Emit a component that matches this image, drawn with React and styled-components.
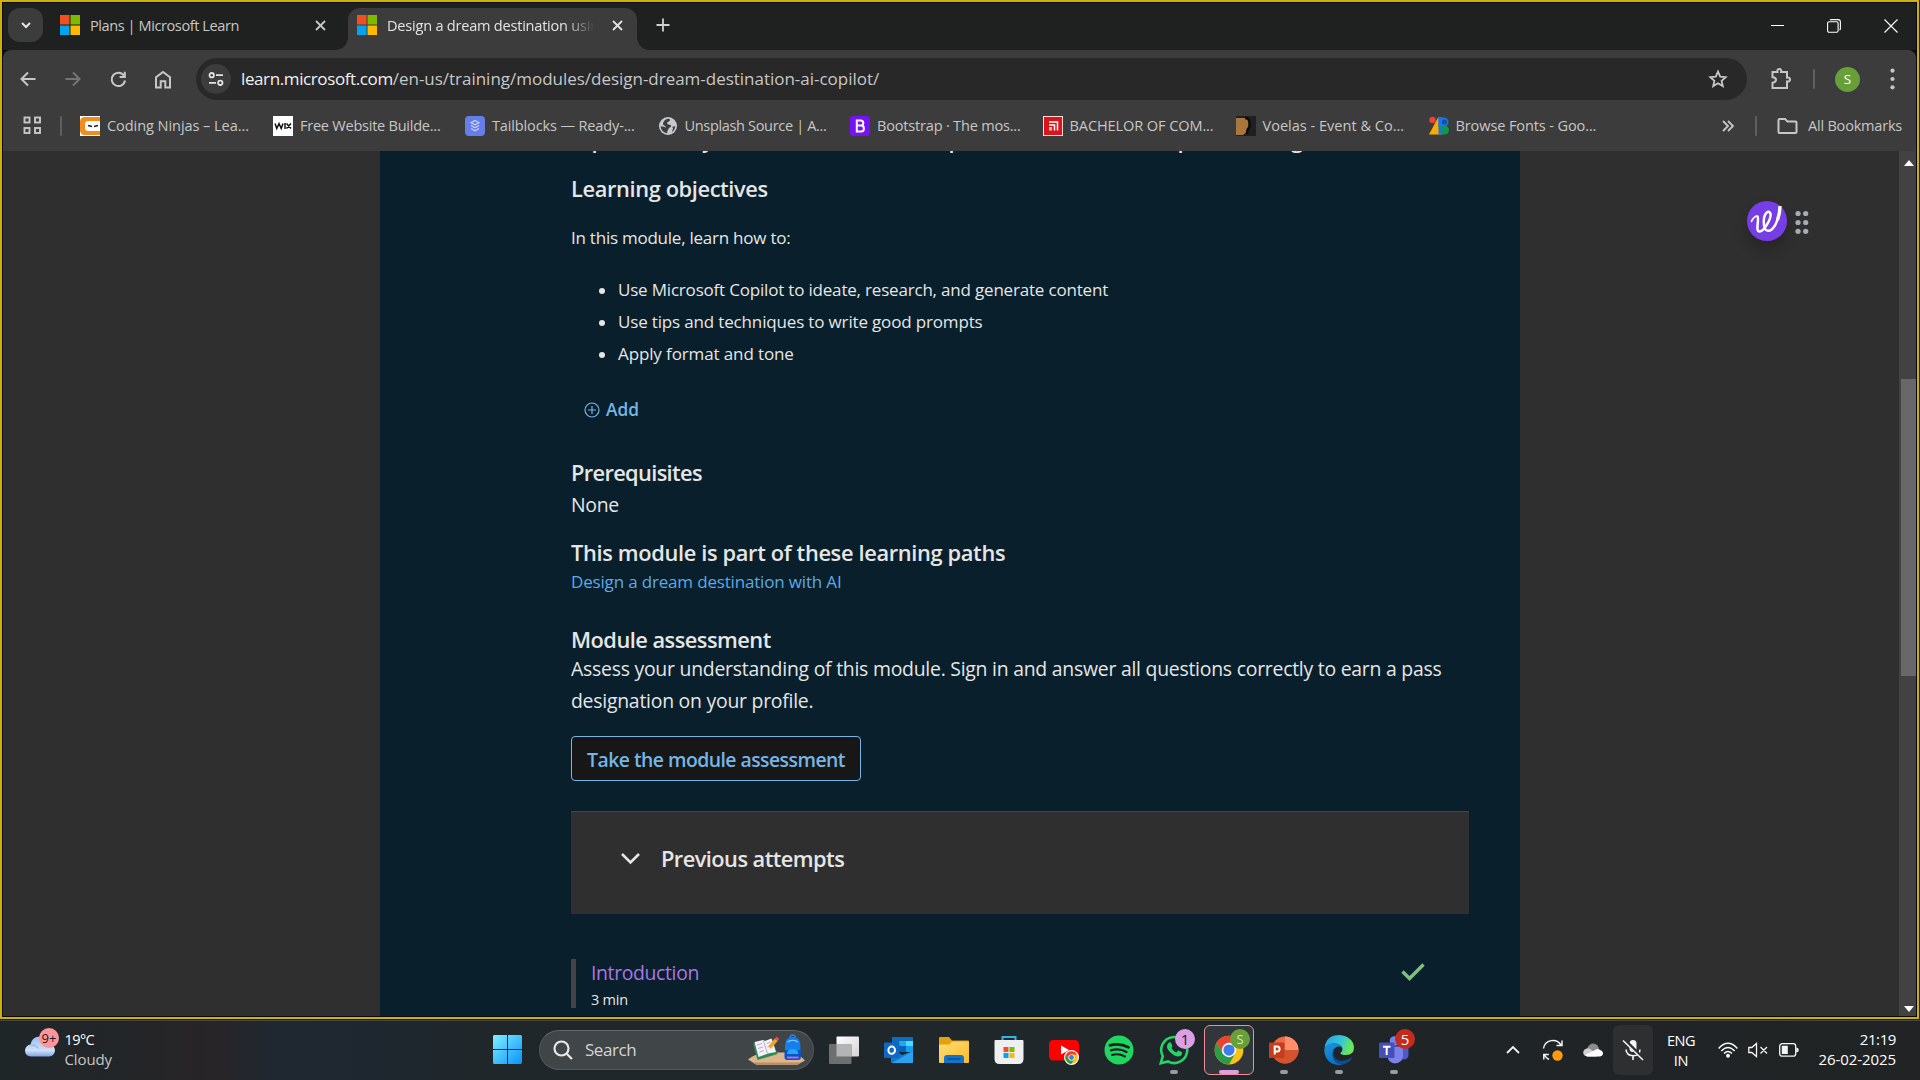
import React from 'react';
import styled, { createGlobalStyle, css } from 'styled-components';

const GlobalStyle = createGlobalStyle`
  * { box-sizing: border-box; }
  body { margin: 0; background: #1f2426; overflow: hidden; }
  #root { font-family: "Open Sans", "Noto Sans", sans-serif; }
  h2, p, ul { margin: 0; padding: 0; font-weight: 400; }
  svg { display: block; flex: none; }
`;

/* ---------- shell ---------- */

const Screen = styled.div`
  width: 1920px;
  height: 1080px;
  display: flex;
  flex-direction: column;
  overflow: hidden;
  background: #1c1f20;
`;

const BrowserWindow = styled.div`
  width: 1919px;
  height: 1019px;
  flex: none;
  display: flex;
  flex-direction: column;
  border: 2px solid #cdb00c;
  padding: 1px;
  background: #0b0c0c;
`;

const Label = styled.span`
  display: block;
  white-space: nowrap;
  font-size: ${(p) => p.$size || 14.55}px;
  letter-spacing: ${(p) => p.$ls || 0}px;
  color: ${(p) => p.$color || '#c7c7c7'};
  line-height: 20px;
`;

/* ---------- tab strip ---------- */

const TabStrip = styled.div`
  height: 47px;
  flex: none;
  display: flex;
  align-items: flex-start;
  background: #1f2120;
  padding: 5px 0 0 5px;
`;

const TabSearch = styled.button`
  width: 35px;
  height: 34px;
  border: 0;
  padding: 0;
  border-radius: 12px;
  background: #3c3c3c;
  display: grid;
  place-items: center;
`;

const Tab = styled.div`
  position: relative;
  display: flex;
  align-items: center;
  height: ${(p) => (p.$active ? 42 : 34)}px;
  width: ${(p) => (p.$active ? 289 : 305)}px;
  padding: ${(p) => (p.$active ? '0 14px 8px 9px' : '0 22px 0 17px')};
  ${(p) =>
    p.$active &&
    css`
      background: #3c3c3c;
      border-radius: 12px 12px 0 0;
      &::before,
      &::after {
        content: '';
        position: absolute;
        bottom: 0;
        width: 12px;
        height: 12px;
      }
      &::before {
        left: -12px;
        background: radial-gradient(circle at 0 0, transparent 11.5px, #3c3c3c 12px);
      }
      &::after {
        right: -12px;
        background: radial-gradient(circle at 100% 0, transparent 11.5px, #3c3c3c 12px);
      }
    `}
`;

const TabTitle = styled(Label)`
  margin-left: 10px;
  flex: 1;
  overflow: hidden;
  ${(p) =>
    p.$fade &&
    css`
      margin-right: 19px;
      -webkit-mask-image: linear-gradient(90deg, #000 86%, transparent 101%);
      mask-image: linear-gradient(90deg, #000 86%, transparent 101%);
    `}
`;

const NewTab = styled.div`
  width: 52px;
  height: 34px;
  display: grid;
  place-items: center;
`;

const WindowControls = styled.div`
  margin-left: auto;
  display: flex;
`;

const WindowControl = styled.div`
  width: 57px;
  height: 35px;
  padding-left: 7px;
  display: grid;
  place-items: center;
`;

/* ---------- toolbar ---------- */

const Toolbar = styled.div`
  height: 54px;
  flex: none;
  display: flex;
  align-items: center;
  background: #3c3c3c;
  border-radius: 8px 8px 0 0;
  padding: 4px 0 0 2px;
`;

const ToolButton = styled.div`
  width: ${(p) => p.$w || 45}px;
  padding-left: ${(p) => p.$inset || 0}px;
  flex: none;
  display: grid;
  place-items: center;
`;

const Omnibox = styled.div`
  width: 1551px;
  height: 42px;
  flex: none;
  margin-left: 11px;
  border-radius: 21px;
  background: #282828;
  display: flex;
  align-items: center;
  padding: 0 19px 0 5px;
`;

const SiteInfo = styled.div`
  width: 30px;
  height: 30px;
  border-radius: 50%;
  background: #3c3c3c;
  display: grid;
  place-items: center;
  margin-right: 10px;
`;

const OmniboxEnd = styled.div`
  margin-left: auto;
`;

const Divider = styled.div`
  width: 2px;
  height: 20px;
  flex: none;
  border-radius: 1px;
  background: #5e5f60;
  margin: ${(p) => p.$m || '0'};
`;

const Avatar = styled.div`
  width: 25px;
  height: 25px;
  flex: none;
  margin-left: 20px;
  border-radius: 50%;
  background: #689f38;
  color: #fff;
  font-size: 13.5px;
  line-height: 25px;
  text-align: center;
`;

/* ---------- bookmarks ---------- */

const BookmarkBar = styled.div`
  height: 47px;
  flex: none;
  display: flex;
  align-items: center;
  background: #3c3c3c;
  padding: 0 14px 4px 20px;
`;

const Bookmark = styled.div`
  width: ${(p) => p.$w}px;
  display: flex;
  align-items: center;
  gap: 7px;
  flex: none;
`;

const BookmarkText = styled(Label)`
  margin-top: -1px;
`;

const BookmarkEnd = styled.div`
  margin-left: auto;
  display: flex;
  align-items: center;
`;

const AllBookmarks = styled(BookmarkText)`
  margin-left: 10px;
`;

/* ---------- page ---------- */

const Viewport = styled.div`
  flex: 1;
  min-height: 0;
  display: flex;
  background: #2f2f2f;
  overflow: hidden;
`;

const Gutter = styled.div`
  width: ${(p) => p.$w}px;
  flex: none;
`;

const Article = styled.main`
  width: 1140px;
  flex: none;
  background: #091f2b;
  padding: 0 51px 0 191px;
  color: #e6e6e6;
`;

const ScrolledLine = styled.div`
  height: 2px;
  overflow: hidden;
  display: flex;
  align-items: flex-end;
  font-size: 21.8px;
  font-weight: 600;
  line-height: 30px;
`;

const ScrolledGlyph = styled.span`
  width: ${(p) => p.$w}px;
  flex: none;
  text-align: right;
  margin-bottom: -2px;
`;

const Heading = styled.h2`
  && { font-weight: 600; }
  font-size: 21.8px;
  line-height: 26px;
  letter-spacing: ${(p) => p.$ls}px;
  && { margin-top: ${(p) => p.$mt || 0}px; }
`;

const Body = styled.p`
  font-size: ${(p) => (p.$large ? 19.4 : 17)}px;
  line-height: ${(p) => (p.$large ? 32 : 28)}px;
  letter-spacing: ${(p) => p.$ls}px;
  && { margin-top: ${(p) => p.$mt || 0}px; }
`;

const Objectives = styled.ul`
  && { margin-top: 22px; padding-left: 28px; }
  list-style: none;
`;

const Objective = styled.li`
  display: flex;
  align-items: center;
  font-size: 17px;
  line-height: 32px;
  letter-spacing: ${(p) => p.$ls}px;
  &::before {
    content: '';
    width: 6px;
    height: 6px;
    border-radius: 50%;
    background: #e6e6e6;
    margin: 2px 13px 0 0;
  }
`;

const AddAction = styled.div`
  display: flex;
  align-items: center;
  gap: 6px;
  margin-top: 26px;
  padding-left: 13px;
  height: 28px;
  font-size: 17.3px;
  font-weight: 600;
  line-height: 28px;
  color: #75b6e7;
`;

const Link = styled.a`
  color: ${(p) => (p.$visited ? '#a877e3' : '#5ea9e6')};
`;

const AssessmentButton = styled.button`
  display: block;
  width: 290px;
  height: 45px;
  margin-top: 19.5px;
  border: 1px solid #75b6e7;
  border-radius: 4px;
  background: #171717;
  color: #75b6e7;
  font: 600 19.4px/28px "Open Sans", sans-serif;
  letter-spacing: -0.54px;
  padding: 3px 0 0;
  white-space: nowrap;
`;

const Accordion = styled.div`
  margin-top: 30px;
  height: 103px;
  background: #2f2f2f;
  border-top: 1px solid #444;
  display: flex;
  align-items: center;
  gap: 21px;
  padding: 0 0 8px 50px;
`;

const AccordionMark = styled.div`
  margin-top: -2px;
`;

const Unit = styled.div`
  margin-top: 45px;
  height: 49px;
  border-left: 5px solid #444;
  padding-left: 15px;
  display: flex;
  justify-content: space-between;
`;

const UnitTitle = styled.div`
  font-size: 19.4px;
  line-height: 28px;
  letter-spacing: -0.35px;
`;

const UnitTime = styled.div`
  font-size: 14.5px;
  line-height: 20px;
  margin-top: 3px;
  letter-spacing: -0.22px;
`;

const UnitState = styled.div`
  padding: 3.5px 44px 0 0;
`;

const RightRail = styled.aside`
  flex: 1;
  padding: 50px 0 0 227px;
`;

const Assistant = styled.div`
  display: flex;
  align-items: center;
  gap: 8px;
`;

const AssistantBadge = styled.div`
  width: 40px;
  height: 40px;
  border-radius: 50%;
  background: #773ee6;
  box-shadow: 0 8px 14px rgba(0, 0, 0, 0.22);
`;

const Scrollbar = styled.div`
  width: 17px;
  flex: none;
  background: #424242;
  display: flex;
  flex-direction: column;
  align-items: center;
  padding: 9px 0 4px 3px;
`;

const Thumb = styled.div`
  width: 15px;
  height: 297px;
  margin: 213px 0 auto;
  background: #686868;
  align-self: flex-end;
`;

/* ---------- taskbar ---------- */

const Taskbar = styled.footer`
  flex: 1;
  display: flex;
  align-items: center;
  border-top: 1px solid #434647;
  margin-top: 1px;
  padding-bottom: 2px;
  background: linear-gradient(90deg, #1f2628 0, #232527 130px, #282427 215px, #1f2730 275px, #1e272f 380px, #20272a 500px, #20272b 1100px, #1f2426 1500px, #212324 1920px);
`;

const Weather = styled.div`
  width: 493px;
  height: 50px;
  padding-left: 24px;
  display: flex;
`;

const WeatherIcon = styled.div`
  position: relative;
  width: 40.5px;
  padding-top: 10px;
`;

const Bubble = styled.span`
  position: absolute;
  left: ${(p) => p.$x}px;
  top: ${(p) => p.$y}px;
  width: 20px;
  height: 20px;
  border-radius: 50%;
  background: ${(p) => p.$bg};
  color: ${(p) => p.$fg};
  font-size: ${(p) => p.$size || 15}px;
  line-height: 20px;
  text-align: center;
`;

const SearchBox = styled.div`
  width: 275px;
  height: 40px;
  margin: 0 2.5px 0 17px;
  border-radius: 20px;
  background: #404547;
  border: 1px solid #53585a;
  border-top-color: #62676a;
  display: flex;
  align-items: center;
  padding: 0 7px 0 13px;
`;

const SearchText = styled(Label)`
  margin: 1px auto 0 12px;
`;

const TaskCell = styled.div`
  position: relative;
  width: ${(p) => (p.$active ? 50 : 55)}px;
  height: 50px;
  margin: ${(p) => (p.$active ? '0 2.5px' : '0')};
  display: grid;
  place-items: center;
  ${(p) =>
    p.$active &&
    css`
      background: #30363a;
      border: 1px solid #f08f99;
      border-radius: 6px;
    `}
`;

const Running = styled.i`
  position: absolute;
  bottom: ${(p) => (p.$wide ? 0 : 1)}px;
  left: 50%;
  width: ${(p) => (p.$wide ? 20 : 8)}px;
  height: 4px;
  margin-left: ${(p) => (p.$wide ? -10 : -4)}px;
  border-radius: 2px;
  background: ${(p) => (p.$wide ? '#dc9fe6' : '#999c9e')};
`;

const Tray = styled.div`
  margin-left: auto;
  padding-right: 24px;
  display: flex;
  align-items: center;
`;

const TrayCell = styled.div`
  width: ${(p) => p.$w || 40}px;
  height: 50px;
  display: grid;
  place-items: center;
  border-radius: 6px;
  background: ${(p) => (p.$lit ? '#2e2f30' : 'transparent')};
`;

const TwoLines = styled.div`
  width: ${(p) => p.$w}px;
  padding-top: ${(p) => p.$top || 0}px;
  padding-bottom: ${(p) => p.$bottom || 0}px;
  text-align: ${(p) => p.$align || 'center'};
`;

/* ---------- drawings ---------- */

const MsLogo = ({ size = 20 }) => (
  <svg width={size} height={size} viewBox="0 0 20 20">
    <path fill="#f25022" d="M0 0h9.5v9.5H0z" />
    <path fill="#7fba00" d="M10.5 0H20v9.5h-9.5z" />
    <path fill="#00a4ef" d="M0 10.5h9.5V20H0z" />
    <path fill="#ffb900" d="M10.5 10.5H20V20h-9.5z" />
  </svg>
);

const Stroke = ({ w, h = w, d, color = '#c7c7c7', sw = 2, children }) => (
  <svg width={w} height={h} viewBox={`0 0 ${w} ${h}`} fill="none" stroke={color} strokeWidth={sw}>
    {d && <path d={d} />}
    {children}
  </svg>
);

const Cross = ({ color }) => <Stroke w={11} d="M1 1l9 9M10 1l-9 9" color={color} sw={1.8} />;

const ChromeLogo = ({ size = 30 }) => (
  <svg width={size} height={size} viewBox="0 0 48 48">
    <circle cx="24" cy="24" r="23" fill="#fbc116" />
    <path fill="#2c9c48" d="M4.1 12.5A23 23 0 0 0 24 47L34 29.5 24 24 14 29.5z" />
    <path fill="#ea4335" d="M4.1 12.5L14 29.7 24 24 24 12.5h19.9A23 23 0 0 0 4.1 12.5z" />
    <circle cx="24" cy="24" r="11.5" fill="#fff" />
    <circle cx="24" cy="24" r="9" fill="#3b7ded" />
  </svg>
);

const icons = {
  ninjas: (
    <svg width="20" height="20" viewBox="0 0 20 20">
      <path fill="#fff" d="M0 0h20v20H0z" />
      <path fill="#f28c1c" d="M5 1h15v4H8Q5 5 5 8v4q0 3 3 3h12v4H5q-5 0-5-5V6q0-5 5-5z" />
      <rect x="6" y="6.5" width="14" height="7.5" rx="3" fill="#fff" />
      <path d="M8 9.5l4 1M18 9.5l-4 1" stroke="#222" strokeWidth="1.6" />
    </svg>
  ),
  wix: (
    <svg width="20" height="20" viewBox="0 0 20 20">
      <path fill="#fff" d="M0 0h20v20H0z" />
      <path fill="none" stroke="#111" strokeWidth="1.5" d="M2 7.5l1.800 5L6 7.500l2.200 5 1.800-5M12 7v6M13.500 7.500l4.500 5M18 7.500l-4.500 5" />
    </svg>
  ),
  tailblocks: (
    <svg width="20" height="20" viewBox="0 0 20 20">
      <rect width="20" height="20" rx="4" fill="#667eea" />
      <path fill="none" stroke="#c9d2fb" strokeWidth="1.2" d="M10 4.500l4 2.200-4 2.200-4-2.200zM6 9.500l4 2.200 4-2.200M6 12.500l4 2.200 4-2.200" />
    </svg>
  ),
  globe: (
    <svg width="20" height="20" viewBox="0 0 20 20">
      <circle cx="10" cy="10" r="9" fill="#c7cacd" />
      <path fill="#3c3c3c" d="M10 2.800c2 .2 2.600 1 1.500 2.200-1.200 1-2.500.8-2.400 2.400.2 1.300 2.500.6 3.600 1.800.8 1 .2 2-1 2.200-1.500.3-1 2.200-2 3-.6.500-.4 2-.3 2.800C5.500 16.800 2.800 14 2.700 10.300c2 .5 4 .2 5 1.500.5-1.200-.6-2-1.700-2.300C4.500 9 4.800 6.500 6 5.200 7 4 8.500 2.800 10 2.800zM14.500 10.500c1 .4 2 0 2.700-.5.1 2.500-1.300 4.700-3.200 6-.3-1.200.8-1.700 1-3 0-1-.7-1.500-.5-2.500z" />
    </svg>
  ),
  bootstrap: (
    <svg width="20" height="20" viewBox="0 0 20 20">
      <rect width="20" height="20" rx="3.5" fill="#7712f6" />
      <path fill="none" stroke="#fff" strokeWidth="2" d="M6.800 4.500h4q2.500 0 2.500 2.600 0 2.500-2.500 2.500h-4 4.400q2.700 0 2.700 2.900t-2.700 2.900H6.800z" />
    </svg>
  ),
  bachelor: (
    <svg width="20" height="20" viewBox="0 0 20 20">
      <path fill="#fbdcdc" d="M0 0h20v20H0z" />
      <path fill="#d9151b" d="M1 1h18v18H1z" />
      <path fill="none" stroke="#fff" strokeWidth="1.5" d="M6 6h8.500v8.500M6 9h5.500v5.500" />
      <path fill="#f8baba" d="M6 11h3v3.500H6z" />
    </svg>
  ),
  voelas: (
    <svg width="20" height="20" viewBox="0 0 20 20">
      <path fill="#202024" d="M0 0h20v20H0z" />
      <path fill="#a9773c" d="M0 2h11q2 2 1.500 5l.5 3-2 2.500-1 4L7 19H0z" />
      <path fill="none" stroke="#0d0a08" strokeWidth="2.4" d="M9 2q4 0 4.500 4v5l-2 3-.5 4" />
    </svg>
  ),
  fonts: (
    <svg width="20" height="20" viewBox="0 0 20 20">
      <circle cx="3.5" cy="4" r="3.2" fill="#ea4335" />
      <path fill="#f9ab00" d="M9 1.500h4v17H0z" />
      <path fill="#1a73e8" d="M9.500 1.500H15a4.500 4.500 0 0 1 0 9H9.500z" />
      <path fill="#1a73e8" d="M9.500 1.500H13v17H9.500z" />
      <path fill="#0d9850" d="M13 9.500h2.500a4.500 4.500 0 0 1 0 9H13z" />
      <circle cx="15.5" cy="6" r="2.5" fill="#174ea6" />
    </svg>
  ),
};

const bookmarks = [
  ['ninjas', 'Coding Ninjas – Lea...', -0.07, 193],
  ['wix', 'Free Website Builde...', -0.25, 192],
  ['tailblocks', 'Tailblocks — Ready-...', -0.15, 192.5],
  ['globe', 'Unsplash Source | A...', -0.35, 192.5],
  ['bootstrap', 'Bootstrap · The mos...', -0.2, 192.5],
  ['bachelor', 'BACHELOR OF COM...', -0.1, 193],
  ['voelas', 'Voelas - Event & Co...', 0, 193],
  ['fonts', 'Browse Fonts - Goo...', -0.12, 180],
];

const SearchArt = () => (
  <svg width="58" height="32" viewBox="0 0 58 32">
    <path fill="#dcb78d" d="M0 25.500q10-7.500 18-7h22q10 0 17 8l-8 4.500H9z" />
    <path fill="#b98f66" d="M4 28.500h49L49 31H9z" />
    <path fill="#2e8b57" d="M5 9.500l19-4.500 5.500 15L9.500 26z" />
    <path fill="#f6f1fa" d="M6.500 8l8.500-2 2 1 6.500-2.500L28 18l-8 1.500-9.500 3.500z" />
    <path fill="none" stroke="#b9aec6" strokeWidth="1" d="M15.500 7l4 12.500M9 11l5-1.500M10 14.500l5-1.500M11.500 18l4.500-1.500M18.500 9.500l4-1.500M19.500 13l4.500-1.500" />
    <path stroke="#f5a524" strokeWidth="3.5" d="M21.500 13.500l7-8" />
    <path stroke="#ef4b4b" strokeWidth="3.5" d="M28 6l2-2.400" />
    <path fill="none" stroke="#2e7fe8" strokeWidth="1.6" d="M42 5q0-4 2.700-4t2.700 4" />
    <path fill="#177ef0" d="M37 12q0-9 7.700-9t7.700 9v11q0 3-3 3h-9.400q-3 0-3-3z" />
    <path fill="#0a55c4" d="M36.500 17q0-1 1-1h14.400q1 0 1 1v6q0 3-3 3H39.500q-3 0-3-3z" />
    <path fill="#24a7f7" d="M39 20q0-5 5.700-5t5.700 5z" />
    <path fill="none" stroke="#8fd0ff" strokeWidth="1.2" d="M39.500 8q5-3.500 10.500 0" />
    <path stroke="#c26cf0" strokeWidth="1.8" d="M39 23.500h11.500" />
  </svg>
);

const StartLogo = () => (
  <svg width="29" height="29" viewBox="0 0 29 29">
    <defs>
      <linearGradient id="start" gradientUnits="userSpaceOnUse" x1="0" y1="0" x2="29" y2="29">
        <stop offset="0" stopColor="#7df0fd" />
        <stop offset="1" stopColor="#0a93fb" />
      </linearGradient>
    </defs>
    <path fill="url(#start)" d="M1 0h13v14H0V1zM15 0h13l1 1v13H15zM0 15h14v14H1l-1-1zM15 15h14v13l-1 1H15z" />
  </svg>
);

const TaskView = () => (
  <svg width="30" height="28" viewBox="0 0 30 28">
    <defs>
      <linearGradient id="tv" x1="0" y1="0" x2="1" y2="1">
        <stop offset="0" stopColor="#fff" />
        <stop offset="1" stopColor="#d4d4d4" />
      </linearGradient>
    </defs>
    <rect x="7.5" y="0.5" width="22.5" height="20" rx="1" fill="url(#tv)" />
    <rect x="0" y="8" width="22.5" height="20" rx="1" fill="#6d6f70" />
    <path fill="#b4b4b4" d="M7.500 8h15v12.500h-15z" />
  </svg>
);

const Outlook = () => (
  <svg width="30" height="28" viewBox="0 0 30 28">
    <path fill="#0f6cbd" d="M8 1h21v13H8z" />
    <path fill="#28a8ea" d="M15 5h7v5h-7z" />
    <path fill="#50d9ff" d="M22 5h7v5h-7z" />
    <path fill="#0364b8" d="M15 10h7v6h-7z" />
    <path fill="#14a0f0" d="M22 10h7v6h-7z" />
    <path fill="#1379cf" d="M7 13l11 6 11-4v11q0 1-1 1H8q-1 0-1-1z" />
    <path fill="#29a3ef" d="M29 15v11q0 1-1 1H8z" />
    <rect x="0" y="6.5" width="15.5" height="15.5" rx="1.2" fill="#0f69c4" />
    <ellipse cx="7.7" cy="14.2" rx="3.3" ry="3.6" fill="none" stroke="#fff" strokeWidth="2" />
  </svg>
);

const Explorer = () => (
  <svg width="30" height="28" viewBox="0 0 30 28">
    <defs>
      <linearGradient id="fe" x1="0" y1="0" x2="1" y2="1">
        <stop offset="0" stopColor="#ffdd75" />
        <stop offset="1" stopColor="#f9bb2a" />
      </linearGradient>
    </defs>
    <path fill="#e5a00d" d="M0 2q0-1 1-1h9l3 3.500h16q1 0 1 1V10H0z" />
    <path fill="url(#fe)" d="M0 9q0-.5 1-.5h9.500L13 5.500h16q1 0 1 1V26q0 1-1 1H1q-1 0-1-1z" />
    <path fill="#1273c8" d="M5 27v-5q0-3 3-3h14q3 0 3 3v5z" />
    <path stroke="#0a4f93" strokeWidth="1.5" d="M8.500 23h13" />
  </svg>
);

const Store = () => (
  <svg width="30" height="30" viewBox="0 0 30 30">
    <path fill="none" stroke="#2fb4ee" strokeWidth="2" d="M8.500 6V2h13v4" />
    <path fill="#efefef" d="M.5 6q0-1 1-1h27q1 0 1 1v18q0 5-5 5h-19q-5 0-5-5z" />
    <path fill="#f25022" d="M9.500 12h5v5h-5z" />
    <path fill="#7fba00" d="M15.500 12h5v5h-5z" />
    <path fill="#00a4ef" d="M9.500 18h5v5h-5z" />
    <path fill="#ffb900" d="M15.500 18h5v5h-5z" />
  </svg>
);

const YouTube = () => (
  <svg width="30" height="30" viewBox="0 0 30 30">
    <rect x="0" y="5" width="30" height="20.5" rx="4.5" fill="#fe0000" />
    <path fill="#fff" d="M12 10.500v9l8-4.500z" />
    <circle cx="22.5" cy="22.5" r="7.5" fill="#fff" />
    <g transform="translate(16 16)">
      <ChromeLogo size={13} />
    </g>
  </svg>
);

const Spotify = () => (
  <svg width="30" height="30" viewBox="0 0 30 30">
    <circle cx="15" cy="15" r="14.5" fill="#1fd760" />
    <g fill="none" stroke="#1a2022" strokeLinecap="round">
      <path strokeWidth="2.8" d="M6 10.300q9.500-2.700 18.500 2" />
      <path strokeWidth="2.3" d="M7 15.300q8.500-2.400 15.500 1.700" />
      <path strokeWidth="2" d="M8 20q6.500-2 13 1.500" />
    </g>
  </svg>
);

const WhatsApp = () => (
  <svg width="30" height="30" viewBox="0 0 30 30">
    <path fill="none" stroke="#25d366" strokeWidth="2.6" d="M1.800 28.200l2-7A13 13 0 1 1 9 26.400z" />
    <path fill="#25d366" d="M9.500 8q1-1.200 2.300-.5l1.600 3.500q.2.700-1 2 1.700 3.200 5 4.500l1.600-1.800q.5-.4 1 0l3 1.500q.5 3.500-3.500 4.300-4 0-8-4T8 11.500Q8 9.500 9.500 8z" />
  </svg>
);

const PowerPoint = () => (
  <svg width="30" height="28" viewBox="0 0 30 28">
    <circle cx="16" cy="14" r="13.5" fill="#ed6c47" />
    <path fill="#ff8f6b" d="M16 .5A13.500 13.500 0 0 1 29.500 14H16z" />
    <path fill="#d35230" d="M2.500 14h27a13.500 13.500 0 0 1-27 0z" />
    <rect x="0" y="6.5" width="15.5" height="15.5" rx="1.2" fill="#c43e1c" />
    <path fill="none" stroke="#fff" strokeWidth="2" d="M5.700 18.500v-8h2.500q2.400 0 2.400 2.500t-2.400 2.500H6" />
  </svg>
);

const Edge = () => (
  <svg width="30" height="30" viewBox="0 0 30 30">
    <defs>
      <linearGradient id="ed1" x1="0" y1="0" x2="1" y2="0.3">
        <stop offset="0" stopColor="#1f9fe6" />
        <stop offset="0.6" stopColor="#35c7d5" />
        <stop offset="1" stopColor="#6ce856" />
      </linearGradient>
      <linearGradient id="ed2" x1="0" y1="0" x2="0.5" y2="1">
        <stop offset="0" stopColor="#1896e0" />
        <stop offset="1" stopColor="#0c6ec4" />
      </linearGradient>
    </defs>
    <path fill="url(#ed1)" d="M.5 13Q2 0 15.500 0 29 1.500 30 12.500q0 7.500-8 7.500-5.500 0-5.500-2 2-1.500 2-4-1-5-8-5.500Q4 8.500.5 13z" />
    <path fill="url(#ed2)" d="M.3 14Q3 8 10 8q6 .3 8 4-5-1.500-8 2-2.500 4 0 9 3 6 9 6.300Q13 31 8 28.500 0 24 .3 14z" />
    <path fill="#0d4e93" d="M10 14q-3 9 5 11.500 6 1.500 12.500-3 .7.3.2 1.200Q24 29 18 29.500 10 29 8.500 21q-.5-4 1.500-7z" />
  </svg>
);

const Teams = () => (
  <svg width="30" height="28" viewBox="0 0 30 28">
    <circle cx="23.5" cy="7" r="3.5" fill="#5059c9" />
    <path fill="#5059c9" d="M20 10.500h8q1.500 0 1.500 1.500v6.500q0 5-5 5h-5z" />
    <circle cx="15.5" cy="5" r="4.8" fill="#7b83eb" />
    <path fill="#7b83eb" d="M9 10.500h14q1 0 1 1V20q-.5 7-8 7.500Q9 27 8.500 20z" />
    <rect x="0" y="6.5" width="15.5" height="15.5" rx="1.2" fill="#464eb8" />
    <path fill="none" stroke="#fff" strokeWidth="2" d="M4 10.800h7.500M7.700 11v8" />
  </svg>
);

const WeatherCloud = () => (
  <svg width="32" height="22" viewBox="0 0 32 22">
    <defs>
      <linearGradient id="wc" x1="0" y1="0" x2="0" y2="1">
        <stop offset="0" stopColor="#9dbdf1" />
        <stop offset="0.7" stopColor="#cfe0fa" />
        <stop offset="1" stopColor="#7fa3e2" />
      </linearGradient>
    </defs>
    <path fill="url(#wc)" d="M7 21.500q-6-.5-6-6.500 1-5 5.500-5.500Q8 2 15 1.500q7 .5 9 8 7 .5 7 6-.5 5.500-6 6z" />
    <path fill="none" stroke="#86a9e6" strokeWidth="1" d="M6.500 10q5-1 8 3.500" />
  </svg>
);

/* ---------- app ---------- */

function Chrome() {
  return (
    <>
      <TabStrip>
        <TabSearch>
          <Stroke w={10} h={8} d="M1 2l4 4 4-4" color="#e6e6e6" sw={2} />
        </TabSearch>
        <Tab>
          <MsLogo />
          <TabTitle $ls={-0.42}>Plans | Microsoft Learn</TabTitle>
          <Cross color="#c7c7c7" />
        </Tab>
        <Tab $active>
          <MsLogo />
          <TabTitle $ls={-0.22} $color="#e3e3e3" $fade>
            Design a dream destination using
          </TabTitle>
          <Cross color="#e3e3e3" />
        </Tab>
        <NewTab>
          <Stroke w={14} d="M7 0.500v13M0.500 7h13" sw={1.8} color="#d0d0d0" />
        </NewTab>
        <WindowControls>
          <WindowControl>
            <Stroke w={13} h={2} d="M0 0.500h13" sw={1} color="#fff" />
          </WindowControl>
          <WindowControl>
            <Stroke w={14} sw={1.1} color="#fff">
              <rect x="0.6" y="2.8" width="10.5" height="10.5" rx="1.5" />
              <path d="M3 1.200Q3.500.6 4.500.6h6.500q2.400 0 2.400 2.400v6.500q0 1-.8 1.500" />
            </Stroke>
          </WindowControl>
          <WindowControl>
            <Stroke w={14} d="M0.500 0.500l13 13M13.500 0.500l-13 13" sw={1.1} color="#fff" />
          </WindowControl>
        </WindowControls>
      </TabStrip>

      <Toolbar>
        <ToolButton $inset={1}>
          <Stroke w={16} d="M15.500 8H2M8 1.500L1.500 8 8 14.500" />
        </ToolButton>
        <ToolButton $inset={1}>
          <Stroke w={16} d="M0.500 8H14M8 1.500L14.500 8 8 14.500" color="#747474" />
        </ToolButton>
        <ToolButton $inset={1}>
          <svg width="17" height="17" viewBox="0 0 17 17">
            <path fill="none" stroke="#c7c7c7" strokeWidth="2" d="M14 4.700A6.700 6.700 0 1 0 15 9.500" />
            <path fill="#c7c7c7" d="M15.800 0.800v6.200H9.600V5h3.900l.3-.4V.8z" />
          </svg>
        </ToolButton>
        <ToolButton $inset={1}>
          <Stroke w={18} h={19} d="M2 17.500V7.300L9 2l7 5.300v10.200h-4.700v-6.200H6.700v6.200z" />
        </ToolButton>
        <Omnibox>
          <SiteInfo>
            <Stroke w={16} h={14} color="#e3e3e3" sw={1.8}>
              <circle cx="3.7" cy="3.2" r="2.2" />
              <path d="M8 3.200h7M1 10.800h7" />
              <circle cx="12.3" cy="10.8" r="2.2" />
            </Stroke>
          </SiteInfo>
          <Label $size={17} $ls={-0.39} $color="#f1f1f1">learn.microsoft.com</Label>
          <Label $size={17} $ls={-0.02}>/en-us/training/modules/design-dream-destination-ai-copilot/</Label>
          <OmniboxEnd>
            <Stroke w={20} sw={1.8} d="M10 2.600l2.200 5 5.500.5-4.100 3.600 1.200 5.400L10 14.200l-4.800 2.900 1.200-5.400L2.300 8.100l5.500-.5z" />
          </OmniboxEnd>
        </Omnibox>
        <ToolButton $w={66} $inset={1}>
          <Stroke w={22} h={24} d="M2.500 5H7.500Q7 2 9.300 2t1.800 3H17v5.500q3-.4 3 2t-3 2V21H2.500v-5.200q3.500-.6 3.500-3t-3.500-2.600z" />
        </ToolButton>
        <Divider />
        <Avatar>S</Avatar>
        <ToolButton $w={56} $inset={8}>
          <svg width="5" height="22" viewBox="0 0 5 22" fill="#c7c7c7">
            <circle cx="2.5" cy="2.7" r="2.1" />
            <circle cx="2.5" cy="11" r="2.1" />
            <circle cx="2.5" cy="19.3" r="2.1" />
          </svg>
        </ToolButton>
      </Toolbar>

      <BookmarkBar>
        <Stroke w={19} sw={1.9}>
          <rect x="1.5" y="1.5" width="5" height="5" />
          <rect x="12" y="1.5" width="5" height="5" />
          <rect x="1.5" y="12" width="5" height="5" />
          <rect x="12" y="12" width="5" height="5" />
        </Stroke>
        <Divider $m="0 18px" />
        {bookmarks.map(([id, title, ls, w]) => (
          <Bookmark key={id} $w={w}>
            {icons[id]}
            <BookmarkText $ls={ls}>{title}</BookmarkText>
          </Bookmark>
        ))}
        <BookmarkEnd>
          <Stroke w={12} h={12} d="M1 1l5 5-5 5M6 1l5 5-5 5" sw={1.8} />
          <Divider $m="0 20px 0 21px" />
          <Stroke w={21} h={18} d="M2.500 2h5.500l2.500 2.500h8q1 0 1 1v9.500q0 1-1 1h-16q-1 0-1-1v-12q0-1 1-1z" />
          <AllBookmarks $ls={-0.23}>All Bookmarks</AllBookmarks>
        </BookmarkEnd>
      </BookmarkBar>
    </>
  );
}

const scrolledGlyphs = [['p', 34], ['y', 109], ['p', 248], ['p', 229], ['g', 112]];

function Page() {
  return (
    <Viewport>
      <Gutter $w={377} />
      <Article>
        <ScrolledLine>
          {scrolledGlyphs.map(([c, w], i) => (
            <ScrolledGlyph key={i} $w={w}>{c}</ScrolledGlyph>
          ))}
        </ScrolledLine>
        <Heading $mt={23} $ls={-0.37}>Learning objectives</Heading>
        <Body $mt={22.3} $ls={-0.24}>In this module, learn how to:</Body>
        <Objectives>
          <Objective $ls={-0.19}>Use Microsoft Copilot to ideate, research, and generate content</Objective>
          <Objective $ls={-0.16}>Use tips and techniques to write good prompts</Objective>
          <Objective $ls={-0.12}>Apply format and tone</Objective>
        </Objectives>
        <AddAction>
          <Stroke w={16} sw={1.2} color="#75b6e7">
            <circle cx="8" cy="8" r="7" />
            <path d="M8 4v8M4 8h8" />
          </Stroke>
          Add
        </AddAction>
        <Heading $mt={36} $ls={-0.65}>Prerequisites</Heading>
        <Body $large $mt={2.5} $ls={-0.27}>None</Body>
        <Heading $mt={19.5} $ls={-0.34}>This module is part of these learning paths</Heading>
        <Body $mt={1.5} $ls={-0.17}>
          <Link>Design a dream destination with AI</Link>
        </Body>
        <Heading $mt={31} $ls={-0.52}>Module assessment</Heading>
        <Body $large $ls={-0.24}>
          Assess your understanding of this module. Sign in and answer all questions correctly to earn a pass
          designation on your profile.
        </Body>
        <AssessmentButton>Take the module assessment</AssessmentButton>
        <Accordion>
          <AccordionMark>
            <Stroke w={19} h={13} d="M1 2l8.500 8.500L18 2" color="#e6e6e6" sw={2.6} />
          </AccordionMark>
          <Heading $ls={-0.55}>Previous attempts</Heading>
        </Accordion>
        <Unit>
          <div>
            <UnitTitle>
              <Link $visited>Introduction</Link>
            </UnitTitle>
            <UnitTime>3 min</UnitTime>
          </div>
          <UnitState>
            <Stroke w={24} h={18} d="M1.500 8.500l7 7L22.500 1.500" color="#7cc27a" sw={3.4} />
          </UnitState>
        </Unit>
      </Article>
      <RightRail>
        <Assistant>
          <AssistantBadge>
            <svg width="40" height="40" viewBox="0 0 40 40" fill="none" stroke="#fff" strokeLinecap="round">
              <path strokeWidth="1.6" d="M4.500 20.500C6 16.500 9 14.300 10.700 15.500" />
              <path strokeWidth="2.5" d="M10.500 15.500C12.500 18 8 30.500 12.500 30.500C17 30.500 25 17 23.300 12.300C22 8.500 17 12 16.800 20C16.600 27 18.500 30.300 21.500 29.800C26 29.200 30 22 32.300 12" />
              <path strokeWidth="3.4" strokeLinecap="butt" d="M30.500 19Q33 12 33 5" />
            </svg>
          </AssistantBadge>
          <svg width="16" height="26" viewBox="0 0 16 26" fill="#a5adb4">
            {[4.5, 13.5, 22.3].map((y) => (
              <React.Fragment key={y}>
                <circle cx="3" cy={y + 1} r="2.6" />
                <circle cx="10.7" cy={y + 1} r="2.6" />
              </React.Fragment>
            ))}
          </svg>
        </Assistant>
      </RightRail>
      <Scrollbar>
        <svg width="10" height="6" viewBox="0 0 10 6"><path fill="#fff" d="M5 0l5 6H0z" /></svg>
        <Thumb />
        <svg width="10" height="6" viewBox="0 0 10 6"><path fill="#fff" d="M5 6l5-6H0z" /></svg>
      </Scrollbar>
    </Viewport>
  );
}

function WindowsTaskbar() {
  return (
    <Taskbar>
      <Weather>
        <WeatherIcon>
          <WeatherCloud />
          <Bubble $x={15} $y={3} $bg="#ff959c" $fg="#1b1b1b" $size={13}>9+</Bubble>
        </WeatherIcon>
        <TwoLines $w={60} $top={4} $align="left">
          <Label $size={14.55} $ls={-0.62} $color="#fff">19°C</Label>
          <Label $size={15} $ls={-0.11} $color="#c4c5c6">Cloudy</Label>
        </TwoLines>
      </Weather>
      <StartLogo />
      <SearchBox>
        <Stroke w={20} sw={2.2} color="#e8e8e8">
          <circle cx="8.5" cy="8.5" r="7" />
          <path d="M13.500 13.500l5.500 5.500" />
        </Stroke>
        <SearchText $size={17} $ls={-0.45} $color="#d3d5d6">Search</SearchText>
        <SearchArt />
      </SearchBox>
      <TaskCell><TaskView /></TaskCell>
      <TaskCell><Outlook /></TaskCell>
      <TaskCell><Explorer /></TaskCell>
      <TaskCell><Store /></TaskCell>
      <TaskCell><YouTube /></TaskCell>
      <TaskCell><Spotify /></TaskCell>
      <TaskCell>
        <WhatsApp />
        <Bubble $x={28.5} $y={4} $bg="#dc9fe6" $fg="#1b1b1b">1</Bubble>
        <Running />
      </TaskCell>
      <TaskCell $active>
        <ChromeLogo />
        <Bubble $x={25} $y={3} $bg="#689f38" $fg="#d7e6c8" $size={13}>S</Bubble>
        <Running $wide />
      </TaskCell>
      <TaskCell><PowerPoint /><Running /></TaskCell>
      <TaskCell><Edge /><Running /></TaskCell>
      <TaskCell>
        <Teams />
        <Bubble $x={28.5} $y={4} $bg="#c42b1c" $fg="#fff">5</Bubble>
        <Running />
      </TaskCell>
      <Tray>
        <TrayCell><Stroke w={14} h={9} d="M1 8l6-6 6 6" color="#f2f2f2" sw={1.8} /></TrayCell>
        <TrayCell>
          <svg width="22" height="22" viewBox="0 0 22 22" fill="none" stroke="#f2f2f2" strokeWidth="1.5">
            <path d="M1.500 9.500A9.500 9.500 0 0 1 19 6M20 1.500V6.500h-5.500M7 20.500A9.500 9.500 0 0 1 2.500 16M1.800 20.500v-5h5" />
            <circle cx="15.5" cy="16.5" r="5.2" fill="#ff9a0b" stroke="none" />
          </svg>
        </TrayCell>
        <TrayCell>
          <svg width="20" height="14" viewBox="0 0 20 14">
            <path fill="#8c8c8c" d="M4 6Q6 .5 10.500.5 15 1 16 6l-8 5z" />
            <path fill="#d0d0d0" d="M4.500 13.500Q.3 13 .2 9.500.5 5.500 5 5.200q3 .3 4 2.300l5 6z" />
            <path fill="#fff" d="M4.500 13.500Q3 13 2 12l11-5.500Q15.500 5.500 17 7q3 1 3 3.500-.5 3-3.500 3z" />
          </svg>
        </TrayCell>
        <TrayCell $lit>
          <svg width="22" height="22" viewBox="0 0 22 22">
            <rect x="7.5" y="1" width="7" height="12" rx="3.5" fill="#f5f5f5" />
            <path fill="none" stroke="#f5f5f5" strokeWidth="1.6" d="M4 10.500q.5 6 7 6.300t7-6.300M11 17v4" />
            <path stroke="#2e2f30" strokeWidth="3.5" d="M2 0.500l19.500 19.500" />
            <path stroke="#f5f5f5" strokeWidth="1.6" d="M1 1.500l20 19.500" />
          </svg>
        </TrayCell>
        <TwoLines $w={56}>
          <Label $ls={-0.5} $color="#fff">ENG</Label>
          <Label $ls={-0.3} $color="#fff">IN</Label>
        </TwoLines>
        <TrayCell $w={38}>
          <svg width="20" height="16" viewBox="0 0 20 16" fill="none" stroke="#f5f5f5" strokeWidth="1.5">
            <path d="M.6 6.500q9.400-10.500 18.800 0M3.300 9q6.700-7.200 13.400 0M6 11.600q4-4.200 8 0" />
            <circle cx="10" cy="13.700" r="2" fill="#f5f5f5" stroke="none" />
          </svg>
        </TrayCell>
        <TrayCell $w={22}>
          <svg width="20" height="16" viewBox="0 0 20 16" fill="none" stroke="#f5f5f5" strokeWidth="1.3">
            <path d="M.8 5.500h3L8.500 1.500v13L3.800 10.500h-3zM12.500 5l6.500 6.500M19 5l-6.500 6.500" />
          </svg>
        </TrayCell>
        <TrayCell $w={40}>
          <svg width="20" height="14" viewBox="0 0 20 14" fill="none" stroke="#f5f5f5" strokeWidth="1.3">
            <rect x=".7" y=".7" width="16" height="12.5" rx="2.5" />
            <path fill="#f5f5f5" stroke="none" d="M2.800 2.800h6v8.300h-6zM17.300 4.500q2.500.3 2.500 2.500t-2.500 2.500z" />
          </svg>
        </TrayCell>
        <TwoLines $w={87} $align="right" $bottom={2}>
          <Label $size={15} $ls={-0.4} $color="#fff">21:19</Label>
          <Label $size={15} $ls={-0.08} $color="#fff">26-02-2025</Label>
        </TwoLines>
      </Tray>
    </Taskbar>
  );
}

export default function App() {
  return (
    <>
      <GlobalStyle />
      <Screen>
        <BrowserWindow>
          <Chrome />
          <Page />
        </BrowserWindow>
        <WindowsTaskbar />
      </Screen>
    </>
  );
}
